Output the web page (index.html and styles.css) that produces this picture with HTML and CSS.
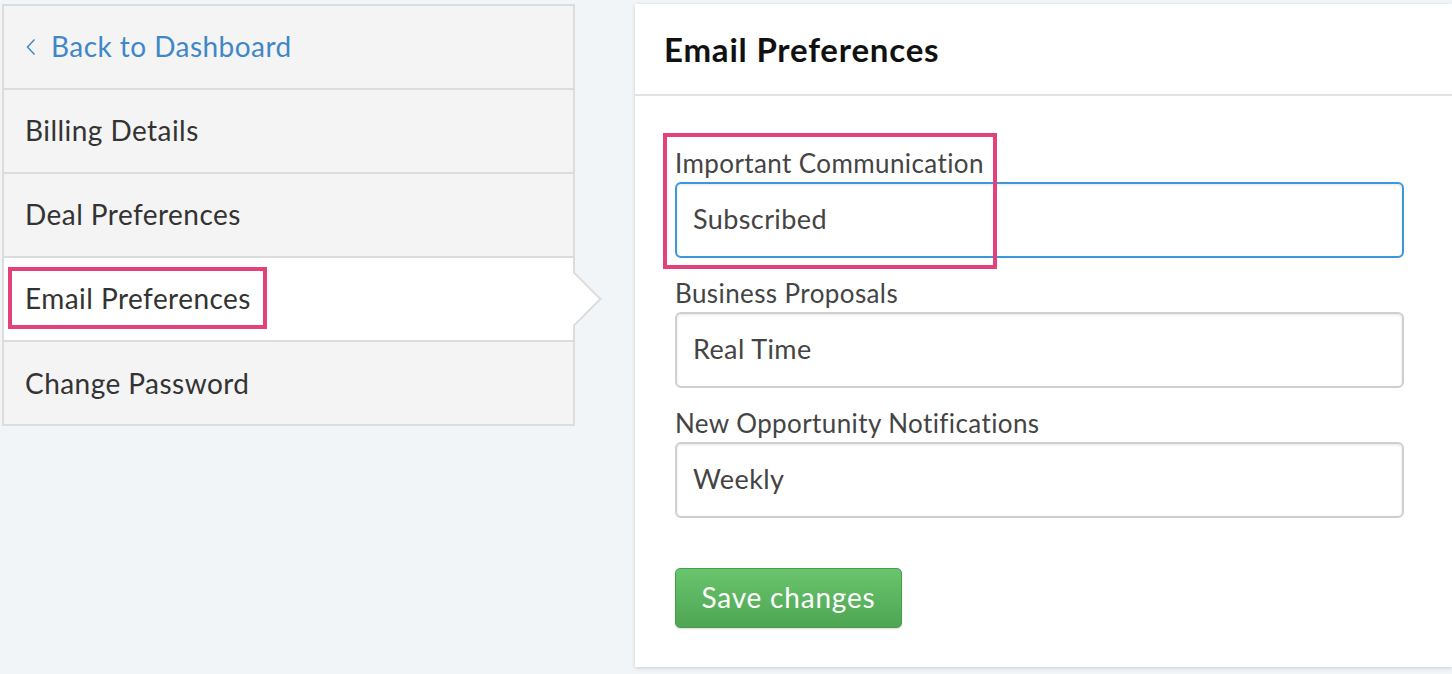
FILE: index.html
```html
<!DOCTYPE html>
<html lang="en">
<head>
<meta charset="utf-8">
<title>Email Preferences</title>
<link rel="stylesheet" href="styles.css">
</head>
<body>
<div class="layout">
  <nav class="sidebar">
    <a class="nav-item back" href="#">
      <svg class="chev" width="10" height="18" viewBox="0 0 10 18"><path d="M8.5 1.5 L1.5 9 L8.5 16.5" fill="none" stroke="#3f87c9" stroke-width="1.4"/></svg>
      <span>Back to Dashboard</span>
    </a>
    <a class="nav-item" href="#">Billing Details</a>
    <a class="nav-item" href="#">Deal Preferences</a>
    <a class="nav-item active" href="#">Email Preferences<span class="mark mark-nav"></span><span class="arrow"></span></a>
    <a class="nav-item" href="#">Change Password</a>
  </nav>
  <main class="panel">
    <header class="panel-head"><h1>Email Preferences</h1></header>
    <form class="panel-body">
      <span class="mark mark-field"></span>
      <div class="field">
        <label class="label">Important Communication</label>
        <div class="input focused">Subscribed</div>
      </div>
      <div class="field">
        <label class="label">Business Proposals</label>
        <div class="input">Real Time</div>
      </div>
      <div class="field">
        <label class="label">New Opportunity Notifications</label>
        <div class="input">Weekly</div>
      </div>
      <button class="btn" type="button">Save changes</button>
    </form>
  </main>
</div>
</body>
</html>
```
FILE: styles.css
```css
* { box-sizing: border-box; }
html, body { margin: 0; height: 100%; }
body {
  background: #f2f5f8;
  font-family: Lato, "Noto Sans", sans-serif;
  color: #333;
  overflow: hidden;
}
.layout {
  display: flex;
  align-items: flex-start;
  padding: 4px 0 0 2px;
  gap: 60px;
}
.sidebar {
  width: 573px;
  flex: none;
  display: flex;
  flex-direction: column;
  border: 2px solid #dcdcdc;
  background: #f4f4f4;
}
.nav-item {
  position: relative;
  display: flex;
  align-items: center;
  height: 84px;
  padding: 0 0 2px 21px;
  border-bottom: 2px solid #dcdcdc;
  font-size: 28px;
  letter-spacing: 0.45px;
  color: #333;
  text-decoration: none;
}
.nav-item:last-child { border-bottom: none; height: 82px; padding-bottom: 0; }
.nav-item.back { color: #3f87c9; padding-left: 22px; gap: 15px; }
.chev { flex: none; margin-top: 2px; }
.nav-item.active { background: #fff; }
.arrow {
  position: absolute;
  right: -21px;
  top: 22px;
  width: 38px;
  height: 38px;
  background: #fff;
  border-top: 2px solid #dcdcdc;
  border-right: 2px solid #dcdcdc;
  transform: rotate(45deg);
  z-index: 2;
}
.mark {
  position: absolute;
  border: 4px solid #e3417c;
  pointer-events: none;
  z-index: 3;
}
.mark-nav { left: 4px; top: 9px; width: 259px; height: 62px; }
.panel {
  flex: 1;
  background: #fff;
  box-shadow: 0 1px 4px rgba(0,0,0,0.16);
  margin-bottom: 6px;
}
.panel-head {
  height: 92px;
  border-bottom: 2px solid #e2e2e2;
  padding: 0 0 0 29px;
  display: flex;
  align-items: center;
}
.panel-head h1 {
  margin: 0;
  font-size: 33px;
  font-weight: 700;
  letter-spacing: 0.8px;
  color: #111;
}
.panel-body {
  position: relative;
  padding: 52px 48px 39px 40px;
  margin: 0;
}
.mark-field { left: 28px; top: 37px; width: 334px; height: 136px; }
.field {
  display: flex;
  flex-direction: column;
  gap: 4px;
  margin-bottom: 20px;
}
.label {
  font-size: 26px;
  line-height: 30px;
  letter-spacing: 0.4px;
  color: #444;
}
.input {
  height: 76px;
  border: 2px solid #cfcfcf;
  border-radius: 6px;
  padding: 0 16px 4px;
  display: flex;
  align-items: center;
  font-size: 27px;
  letter-spacing: 0.4px;
  color: #444;
  box-shadow: inset 0 1px 3px rgba(0,0,0,0.10);
}
.input.focused { border-color: #3b99db; }
.btn {
  margin-top: 30px;
  width: 227px;
  height: 60px;
  border: 1px solid #4b9b4f;
  border-radius: 5px;
  background: linear-gradient(#69c56d, #4ea552);
  color: #fff;
  font-family: inherit;
  font-size: 28px;
  letter-spacing: 0.8px;
  padding: 0 0 2px;
  box-shadow: 0 1px 2px rgba(0,0,0,0.15);
}
```
